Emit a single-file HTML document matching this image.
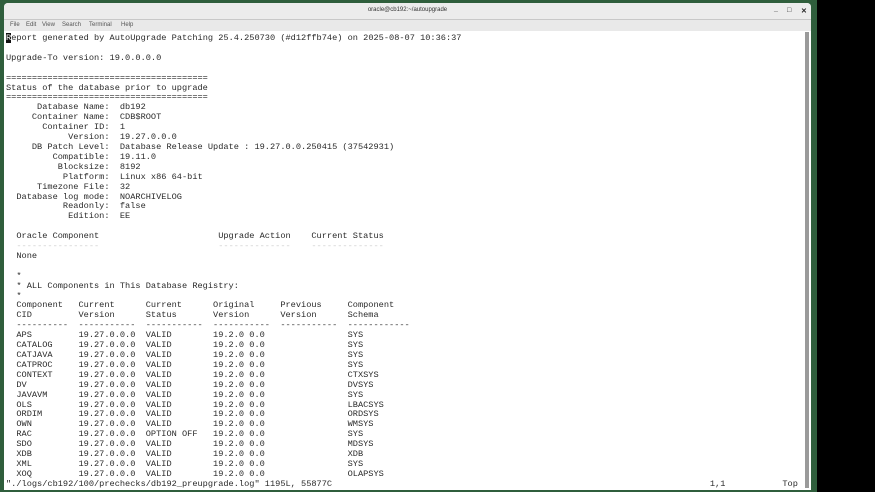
<!DOCTYPE html>
<html><head><meta charset="utf-8"><style>
html,body{margin:0;padding:0;}
body{width:875px;height:492px;overflow:hidden;background:#2f5e3c;position:relative;font-family:"Liberation Sans",sans-serif;}
.black{position:absolute;left:817px;top:0;width:58px;height:492px;background:#000;}
.win{position:absolute;left:4px;top:3px;width:807px;height:487px;background:#fff;border-radius:4px 4px 0 0;overflow:hidden;}
.title{position:absolute;left:0;top:0;width:807px;height:16px;background:#ececec;border-bottom:1px solid #c8c8c8;}
.title span{position:absolute;left:0;width:100%;top:4px;text-align:center;font-size:6px;color:#333;}
.ctl{position:absolute;top:4px;font-size:7px;color:#222;font-weight:bold;}
.menu{position:absolute;left:0;top:17px;width:807px;height:11px;background:#e9e9e9;font-size:6px;color:#555;}
.menu span{position:absolute;top:2px;}
.term{position:absolute;left:2px;top:28px;width:798px;height:459px;background:#fff;overflow:hidden;}
pre{margin:0;position:absolute;left:0;top:3px;font-family:"Liberation Mono",monospace;font-size:8.63px;line-height:9.9px;color:#2a2a2a;}
.cur{background:#111;color:#fff;}
.faint{color:#ccc;}
.sb{position:absolute;left:801px;top:29px;width:4px;height:456px;background:#9a9a9a;}
</style></head><body>
<div class="black"></div>
<div class="win">
 <div class="title"><span>oracle@cb192:~/autoupgrade</span>
  <div class="ctl" style="left:770px;top:3px">_</div>
  <div class="ctl" style="left:783px">&#x25A1;</div>
  <div class="ctl" style="left:797px">&#x2715;</div>
 </div>
 <div class="menu"><span style="left:6px">File</span><span style="left:22px">Edit</span><span style="left:38px">View</span><span style="left:58px">Search</span><span style="left:85px">Terminal</span><span style="left:117px">Help</span></div>
 <div class="term"><pre><span class="cur">R</span>eport generated by AutoUpgrade Patching 25.4.250730 (#d12ffb74e) on 2025-08-07 10:36:37

Upgrade-To version: 19.0.0.0.0

=======================================
Status of the database prior to upgrade
=======================================
      Database Name:  db192
     Container Name:  CDB$ROOT
       Container ID:  1
            Version:  19.27.0.0.0
     DB Patch Level:  Database Release Update : 19.27.0.0.250415 (37542931)
         Compatible:  19.11.0
          Blocksize:  8192
           Platform:  Linux x86 64-bit
      Timezone File:  32
  Database log mode:  NOARCHIVELOG
           Readonly:  false
            Edition:  EE

  Oracle Component                       Upgrade Action    Current Status
  <span class="faint">----------------                       --------------    --------------</span>
  None

  *
  * ALL Components in This Database Registry:
  *
  Component   Current      Current      Original     Previous     Component
  CID         Version      Status       Version      Version      Schema
  ----------  -----------  -----------  -----------  -----------  ------------
  APS         19.27.0.0.0  VALID        19.2.0 0.0                SYS
  CATALOG     19.27.0.0.0  VALID        19.2.0 0.0                SYS
  CATJAVA     19.27.0.0.0  VALID        19.2.0 0.0                SYS
  CATPROC     19.27.0.0.0  VALID        19.2.0 0.0                SYS
  CONTEXT     19.27.0.0.0  VALID        19.2.0 0.0                CTXSYS
  DV          19.27.0.0.0  VALID        19.2.0 0.0                DVSYS
  JAVAVM      19.27.0.0.0  VALID        19.2.0 0.0                SYS
  OLS         19.27.0.0.0  VALID        19.2.0 0.0                LBACSYS
  ORDIM       19.27.0.0.0  VALID        19.2.0 0.0                ORDSYS
  OWN         19.27.0.0.0  VALID        19.2.0 0.0                WMSYS
  RAC         19.27.0.0.0  OPTION OFF   19.2.0 0.0                SYS
  SDO         19.27.0.0.0  VALID        19.2.0 0.0                MDSYS
  XDB         19.27.0.0.0  VALID        19.2.0 0.0                XDB
  XML         19.27.0.0.0  VALID        19.2.0 0.0                SYS
  XOQ         19.27.0.0.0  VALID        19.2.0 0.0                OLAPSYS
"./logs/cb192/100/prechecks/db192_preupgrade.log" 1195L, 55877C                                                                         1,1           Top</pre></div>
 <div class="sb"></div>
</div>
</body></html>
